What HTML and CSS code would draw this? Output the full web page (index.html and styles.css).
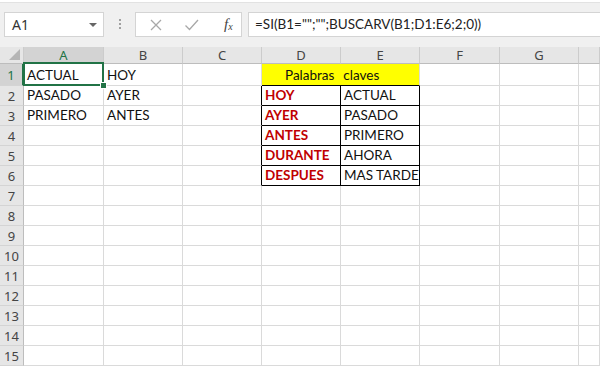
FILE: index.html
```html
<!DOCTYPE html>
<html lang="es">
<head>
    <meta charset="UTF-8">
    <title>BUSCARV</title>
    <link rel="stylesheet" href="styles.css">
</head>
<body>

    <!-- Formula bar -->
    <div class="toolbar">
        <div class="namebox">
            <span class="ref">A1</span>
            <span class="caret"></span>
        </div>
        <div class="grip"><i></i><i></i><i></i></div>
        <div class="fxbox">
            <svg width="14" height="14" viewBox="0 0 14 14"><path d="M2 2L12 12M12 2L2 12" stroke="#a8a8a8" stroke-width="1.3" fill="none"/></svg>
            <svg width="16" height="14" viewBox="0 0 16 14"><path d="M1.5 7.5L5.5 11.5L14 2" stroke="#a8a8a8" stroke-width="1.3" fill="none"/></svg>
            <span class="fx">f<sub>x</sub></span>
        </div>
        <div class="formula">=SI(B1="";"";BUSCARV(B1;D1:E6;2;0))</div>
    </div>

    <!-- Sheet -->
    <div class="sheet">
        <div class="row hdr">
            <div class="corner"><span class="tri"></span></div>
            <div class="sel">A</div><div>B</div><div>C</div><div>D</div><div>E</div><div>F</div><div>G</div><div></div>
        </div>
        <div class="row first">
            <div class="rh on">1</div>
            <div class="active">ACTUAL</div><div>HOY</div><div class="edge"></div>
            <div class="title">Palabras&nbsp;&nbsp;claves</div>
            <div></div><div></div><div></div>
        </div>
        <div class="row">
            <div class="rh">2</div>
            <div>PASADO</div><div>AYER</div><div class="edge"></div>
            <div class="key">HOY</div><div class="val">ACTUAL</div><div></div><div></div><div></div>
        </div>
        <div class="row">
            <div class="rh">3</div>
            <div>PRIMERO</div><div>ANTES</div><div class="edge"></div>
            <div class="key">AYER</div><div class="val">PASADO</div><div></div><div></div><div></div>
        </div>
        <div class="row">
            <div class="rh">4</div>
            <div></div><div></div><div class="edge"></div>
            <div class="key">ANTES</div><div class="val">PRIMERO</div><div></div><div></div><div></div>
        </div>
        <div class="row">
            <div class="rh">5</div>
            <div></div><div></div><div class="edge"></div>
            <div class="key">DURANTE</div><div class="val">AHORA</div><div></div><div></div><div></div>
        </div>
        <div class="row">
            <div class="rh">6</div>
            <div></div><div></div><div class="edge"></div>
            <div class="key">DESPUES</div><div class="val">MAS TARDE</div><div></div><div></div><div></div>
        </div>
        <div class="row"><div class="rh">7</div><div></div><div></div><div></div><div></div><div></div><div></div><div></div><div></div></div>
        <div class="row"><div class="rh">8</div><div></div><div></div><div></div><div></div><div></div><div></div><div></div><div></div></div>
        <div class="row"><div class="rh">9</div><div></div><div></div><div></div><div></div><div></div><div></div><div></div><div></div></div>
        <div class="row"><div class="rh">10</div><div></div><div></div><div></div><div></div><div></div><div></div><div></div><div></div></div>
        <div class="row"><div class="rh">11</div><div></div><div></div><div></div><div></div><div></div><div></div><div></div><div></div></div>
        <div class="row"><div class="rh">12</div><div></div><div></div><div></div><div></div><div></div><div></div><div></div><div></div></div>
        <div class="row"><div class="rh">13</div><div></div><div></div><div></div><div></div><div></div><div></div><div></div><div></div></div>
        <div class="row"><div class="rh">14</div><div></div><div></div><div></div><div></div><div></div><div></div><div></div><div></div></div>
        <div class="row"><div class="rh">15</div><div></div><div></div><div></div><div></div><div></div><div></div><div></div><div></div></div>
    </div>

</body>
</html>
```

FILE: styles.css
```css
body {
    margin: 0;
    width: 600px;
    height: 369px;
    overflow: hidden;
    background-color: #ffffff;
    font-family: Lato, "Liberation Sans", sans-serif;
}

/* formula bar */
.toolbar {
    box-sizing: border-box;
    background-color: #f0f0f0;
    border-top: 1px solid #e2e2e2;
    margin-top: 2px;
    height: 45px;
    display: flex;
    align-items: flex-start;
    padding-top: 9px;
}

.namebox {
    margin-left: 4px;
    width: 100px;
    height: 25px;
    box-sizing: border-box;
    background-color: #ffffff;
    border: 1px solid #d4d4d4;
    display: flex;
    align-items: center;
    justify-content: space-between;
    padding: 0 6px 0 7px;
}

.ref {
    font-family: "Noto Sans", sans-serif;
    font-size: 14px;
    color: #333;
}

.caret {
    width: 0;
    height: 0;
    border-left: 4px solid transparent;
    border-right: 4px solid transparent;
    border-top: 4px solid #666;
}

.grip {
    width: 31px;
    display: flex;
    flex-direction: column;
    align-items: center;
    padding-top: 7px;
    gap: 2px;
}

.grip i {
    width: 2px;
    height: 2px;
    background-color: #a0a0a0;
}

.fxbox {
    width: 107px;
    height: 25px;
    box-sizing: border-box;
    background-color: #ffffff;
    border: 1px solid #d4d4d4;
    display: flex;
    align-items: center;
    padding-left: 13px;
}

.fxbox svg:nth-child(2) {
    margin-left: 21px;
}

.fx {
    margin-left: 24px;
    font-family: "Liberation Serif", serif;
    font-style: italic;
    font-size: 15px;
    color: #444;
}

.fx sub {
    font-size: 10px;
    vertical-align: -1px;
}

.formula {
    flex: 1;
    margin-left: 6px;
    height: 25px;
    box-sizing: border-box;
    background-color: #ffffff;
    border: 1px solid #d4d4d4;
    border-right: none;
    padding-left: 6px;
    font-size: 13.5px;
    line-height: 23px;
    color: #222;
}

/* grid */
.row {
    display: grid;
    grid-template-columns: 24px 80px 79px 79px 79px 79px 80px 79px 1fr;
    height: 20px;
}

.row > div {
    box-sizing: border-box;
    border-right: 1px solid #dadada;
    border-bottom: 1px solid #dadada;
    padding: 0 3px 2px;
    display: flex;
    align-items: flex-end;
    white-space: nowrap;
    overflow: hidden;
    font-size: 13.5px;
    line-height: 16px;
    color: #111;
}

.row.first {
    height: 22px;
}

.hdr {
    height: 17px;
}

.hdr > div {
    background-color: #e6e6e6;
    border-right-color: #cccccc;
    border-bottom-color: #bdbdbd;
    justify-content: center;
    align-items: center;
    padding: 0;
    font-family: "Noto Sans", sans-serif;
    font-size: 13px;
    color: #444;
}

.hdr > div.sel {
    background-color: #d3d3d3;
    color: #217346;
    border-bottom: 2px solid #217346;
}

.corner {
    position: relative;
}

.tri {
    position: absolute;
    right: 3px;
    bottom: 3px;
    width: 0;
    height: 0;
    border-left: 11px solid transparent;
    border-bottom: 11px solid #b5b5b5;
}

.row > .rh {
    background-color: #e6e6e6;
    border-right-color: #bdbdbd;
    border-bottom-color: #d4d4d4;
    justify-content: center;
    align-items: center;
    padding: 0;
    font-family: "Noto Sans", sans-serif;
    font-size: 13px;
    color: #444;
}

.row > .rh.on {
    background-color: #d3d3d3;
    color: #217346;
    border-right: 2px solid #217346;
}

/* selected cell */
.row > .active {
    position: relative;
    overflow: visible;
}

.active::after {
    content: "";
    position: absolute;
    left: -1px;
    top: -2px;
    right: -1px;
    bottom: -1px;
    border: 2px solid #217346;
}

.active::before {
    content: "";
    position: absolute;
    right: -4px;
    bottom: -4px;
    width: 5px;
    height: 5px;
    background-color: #217346;
    border: 1px solid #ffffff;
    z-index: 2;
}

/* lookup table */
.row > .edge {
    border-right-color: #000000;
}

.row.first > .edge {
    border-right-color: #dadada;
}

.row > .title {
    grid-column: span 2;
    background-color: #ffff00;
    border-right-color: #dadada;
    border-bottom-color: #000000;
    padding-left: 23px;
    word-spacing: 1px;
}

.row > .key {
    border-right-color: #000000;
    border-bottom-color: #000000;
    font-weight: bold;
    color: #c00000;
}

.row > .val {
    border-right-color: #000000;
    border-bottom-color: #000000;
}
```
